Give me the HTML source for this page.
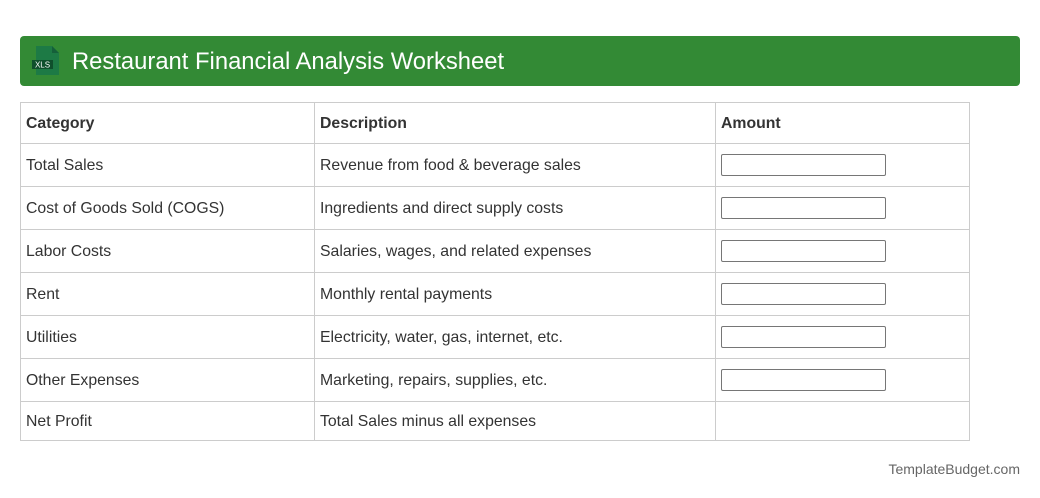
<!DOCTYPE html>
<html><head><style>
body{margin:0;background:#fff;font-family:"Liberation Sans",Arial,sans-serif;color:#333;}
.hdr{position:absolute;left:20px;top:36px;width:1000px;height:50px;background:#338a35;border-radius:4px;}
.hdr .t{position:absolute;left:52px;top:12px;font-size:23.8px;color:#fff;}
table{position:absolute;left:20px;top:102px;border-collapse:collapse;width:950px;font-size:15.8px;}
td,th{border:1px solid #ccc;padding:2px 5px 0;text-align:left;}
th{height:38px;font-weight:bold;}
td{height:40px;}
tr:last-child td{height:36px;}
.in{display:block;width:163px;height:20px;border:1px solid #767676;border-radius:2px;margin-top:-3px;}
.f{position:absolute;right:20px;top:461px;font-size:14px;color:#666;}
</style></head><body>
<div class="hdr">
<svg style="position:absolute;left:12px;top:10px" width="30" height="31" viewBox="0 0 30 31">
<path d="M4 0H20L27 7V29H4Z" fill="#1d7a45"/>
<path d="M20 0V7H27Z" fill="#15603a"/>
<rect x="0" y="14" width="21" height="9" fill="#0f4f2c"/>
<text x="10.5" y="21.5" font-size="8" fill="#fff" text-anchor="middle" font-family="Liberation Sans">XLS</text>
</svg>
<div class="t">Restaurant Financial Analysis Worksheet</div></div>
<table>
<tr><th style="width:283px">Category</th><th style="width:390px">Description</th><th>Amount</th></tr>
<tr><td>Total Sales</td><td>Revenue from food &amp; beverage sales</td><td><span class="in"></span></td></tr>
<tr><td>Cost of Goods Sold (COGS)</td><td>Ingredients and direct supply costs</td><td><span class="in"></span></td></tr>
<tr><td>Labor Costs</td><td>Salaries, wages, and related expenses</td><td><span class="in"></span></td></tr>
<tr><td>Rent</td><td>Monthly rental payments</td><td><span class="in"></span></td></tr>
<tr><td>Utilities</td><td>Electricity, water, gas, internet, etc.</td><td><span class="in"></span></td></tr>
<tr><td>Other Expenses</td><td>Marketing, repairs, supplies, etc.</td><td><span class="in"></span></td></tr>
<tr><td>Net Profit</td><td>Total Sales minus all expenses</td><td></td></tr>
</table>
<div class="f">TemplateBudget.com</div>
</body></html>
